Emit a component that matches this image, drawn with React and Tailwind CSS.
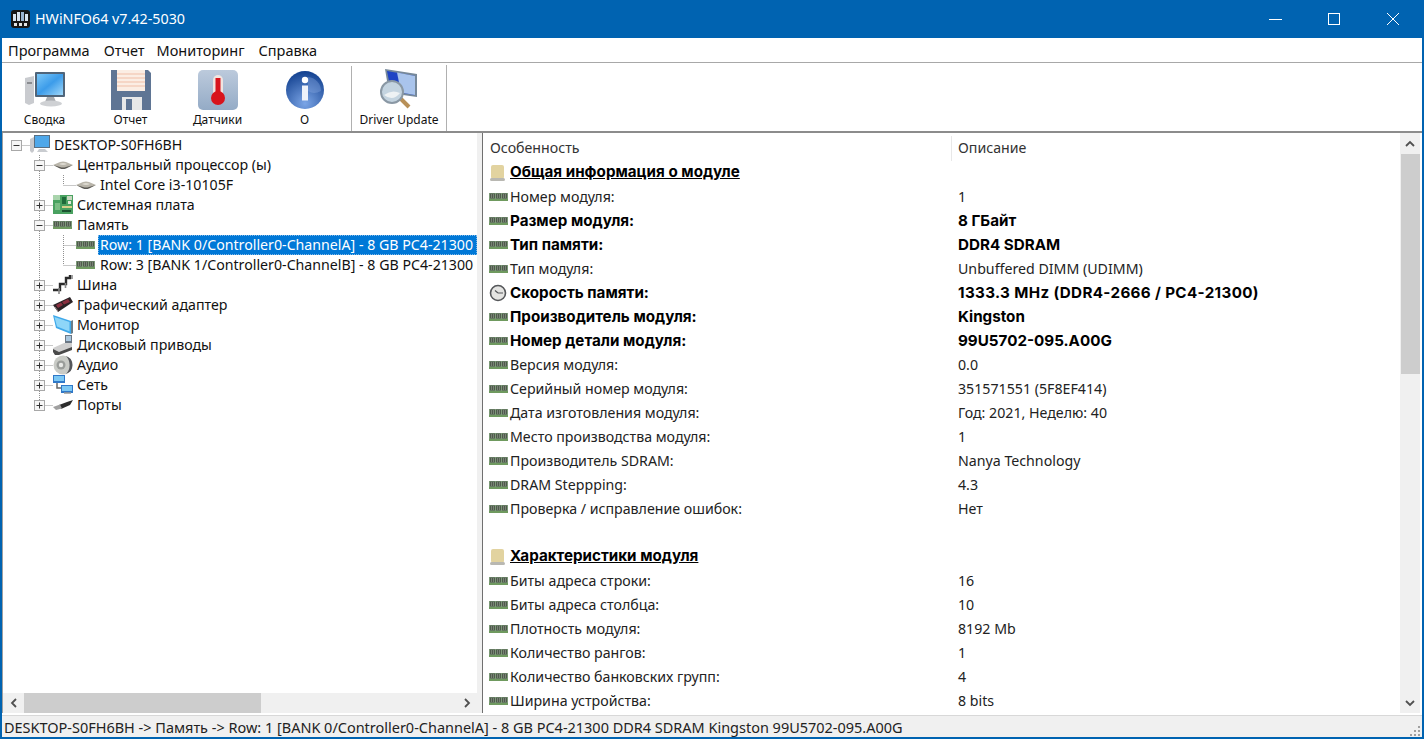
import { useId } from "react";

// small 16-20px tree / list icons
const RamIcon = () => (
  <svg width="20" height="10" viewBox="0 0 20 10" className="shrink-0">
    <rect x="0" y="1" width="19" height="8" fill="#7d9a78" />
    <rect x="1" y="1.5" width="5" height="5" fill="#4f5a4c" />
    <rect x="7" y="1.5" width="5" height="5" fill="#4f5a4c" />
    <rect x="13" y="1.5" width="5" height="5" fill="#4f5a4c" />
    <path d="M2.5 2V6 M4.5 2V6 M8.5 2V6 M10.5 2V6 M14.5 2V6 M16.5 2V6" stroke="#8a9486" strokeWidth="0.7" />
    <rect x="0" y="7" width="19" height="2" fill="#6f9a5f" />
  </svg>
);

const CpuIcon = () => (
  <svg width="20" height="10" viewBox="0 0 20 10" className="shrink-0">
    <path d="M0 5 L7 2 Q10 1 13 2 L20 5 L13 8 Q10 9 7 8 Z" fill="#b9b5aa" />
    <path d="M0 5 L7 7 Q10 8 13 7 L20 5 L13 8.5 Q10 9.5 7 8.5 Z" fill="#5a5853" />
    <path d="M6 4 Q10 2 14 4 Q10 6 6 4 Z" fill="#dedbd2" />
  </svg>
);

const BoardIcon = () => (
  <svg width="20" height="20" viewBox="0 0 20 20" className="shrink-0">
    <rect x="0" y="0" width="20" height="19" fill="#49a160" />
    <rect x="0" y="0" width="7" height="5" fill="#a9d4ac" />
    <rect x="9" y="2" width="4" height="7" fill="#1f6a3a" />
    <rect x="14" y="1" width="5" height="4" fill="#c9d8c0" />
    <rect x="2" y="8" width="5" height="7" fill="#7bbd84" />
    <rect x="9" y="11" width="10" height="2" fill="#d6d08a" />
    <rect x="9" y="15" width="9" height="2" fill="#1b5430" />
    <rect x="15" y="6" width="3" height="3" fill="#e2e6d8" />
  </svg>
);

const BusIcon = () => (
  <svg width="20" height="20" viewBox="0 0 20 20" className="shrink-0">
    <path d="M0 15 H7 V9 H13 V3 H17 V0" fill="none" stroke="#2b2b2b" strokeWidth="2.4" />
    <path d="M6 19 V13 M12.5 13 V8 M19 0 V4" stroke="#8a8a8a" strokeWidth="1.6" />
  </svg>
);

const GpuIcon = () => (
  <svg width="20" height="16" viewBox="0 0 20 16" className="shrink-0">
    <path d="M0 8 L17 0 L20 5 L5 15 Z" fill="#2a2326" />
    <path d="M3 8 L8 5.5 L10 8 L5 11 Z M9 5 L15 2 L17 5 L11 7.5 Z" fill="#8a3040" />
    <path d="M2 10 L5 14" stroke="#9a8080" strokeWidth="1" />
  </svg>
);

const MonitorIcon = () => (
  <svg width="20" height="20" viewBox="0 0 20 20" className="shrink-0">
    <path d="M0 0 L18 6 V19 L3 13 Z" fill="#3ea8ea" />
    <path d="M1.5 2 L16.5 7 V16.5 L4 11.5 Z" fill="#8ed6f8" />
    <path d="M18 6 L20 5 V18 L18 19 Z" fill="#6b7d88" />
  </svg>
);

const DiskIcon = () => (
  <svg width="20" height="20" viewBox="0 0 20 20" className="shrink-0">
    <rect x="12" y="0" width="7" height="9" fill="#6b7784" />
    <rect x="13" y="1" width="5" height="5" fill="#a9c6de" />
    <path d="M0 13 L11 8 H19 V13 L6 18 H2 Z" fill="#cfcfcf" />
    <path d="M0 14 L6 17 L19 12 V15 L6 20 H2 L0 17 Z" fill="#4a4a4a" />
  </svg>
);

const AudioIcon = () => (
  <svg width="20" height="20" viewBox="0 0 20 20" className="shrink-0">
    <circle cx="10" cy="10" r="9.5" fill="#c9cbc6" />
    <path d="M13 1 A9.5 9.5 0 0 1 13 19 A13 13 0 0 0 13 1" fill="#55575b" />
    <circle cx="8" cy="10" r="4.5" fill="#9a9d9a" />
    <circle cx="8" cy="10" r="2.2" fill="#e8e9e6" />
  </svg>
);

const NetworkIcon = () => (
  <svg width="20" height="20" viewBox="0 0 20 20" className="shrink-0">
    <path d="M0 0 H12 V8 H0 Z" fill="#2f78c8" />
    <rect x="1" y="1" width="10" height="5" fill="#7cc8f4" />
    <path d="M8 10 H20 V18 H8 Z" fill="#2f78c8" />
    <rect x="9" y="11" width="10" height="5" fill="#7cc8f4" />
    <path d="M4 8 V13 H8" fill="none" stroke="#666" strokeWidth="1.5" />
    <path d="M11 18 H18" stroke="#999" strokeWidth="1.5" />
  </svg>
);

const PortIcon = () => (
  <svg width="20" height="12" viewBox="0 0 20 12" className="shrink-0">
    <path d="M6 6 L14 3 L20 1 L17 6 L8 10 Z" fill="#2c2c2c" />
    <path d="M0 8 L7 5.5 L9 9.5 L3 11 Z" fill="#a0a0a0" />
  </svg>
);

const ClockIcon = () => (
  <svg width="18" height="18" viewBox="0 0 18 18" className="shrink-0">
    <circle cx="9" cy="9" r="7.5" fill="#e4e4e2" stroke="#55575a" strokeWidth="1.6" />
    <path d="M9 9 H14 M9 9 L6 6.5" stroke="#55575a" strokeWidth="1.2" />
  </svg>
);

const SectionIcon = () => (
  <svg width="18" height="18" viewBox="0 0 18 18" className="shrink-0">
    <rect x="2" y="1" width="13" height="14" rx="2" fill="#e2d3a0" />
    <rect x="1" y="14" width="15" height="3" rx="1.5" fill="#b9b8b2" />
  </svg>
);

const PcIcon = () => (
  <svg width="20" height="20" viewBox="0 0 20 20" className="shrink-0">
    <path d="M0 4 L4 2 V16 L2 18 L0 16 Z" fill="#c6c8cc" />
    <rect x="4" y="0" width="16" height="13" fill="#5a6f82" />
    <rect x="5" y="1" width="14" height="11" fill="#4fa8ea" />
    <path d="M9 14 H15 L18 17 H7 Z" fill="#c9ccd0" />
  </svg>
);

// dotted guide lines and the +/- box to the left of a tree row
const Guide = ({ level, box, last }) => {
  const w = [27, 50, 73][level];
  return (
    <svg width={w} height="20" className="shrink-0">
      {level === 0 && (
        <g>
          <path d="M13.5 10.5 H27" stroke="#909090" strokeDasharray="1 1" />
        </g>
      )}
      {level === 1 && (
        <g>
          <path d={last ? "M36.5 0 V10" : "M36.5 0 V20"} stroke="#909090" strokeDasharray="1 1" />
          <path d="M36.5 10.5 H50" stroke="#909090" strokeDasharray="1 1" />
        </g>
      )}
      {level === 2 && (
        <g>
          <path d="M36.5 0 V20" stroke="#909090" strokeDasharray="1 1" />
          <path d={last ? "M60.5 0 V10" : "M60.5 0 V20"} stroke="#909090" strokeDasharray="1 1" />
          <path d="M60.5 10.5 H73" stroke="#909090" strokeDasharray="1 1" />
        </g>
      )}
      {box && (
        <g>
          <rect x={level === 0 ? 8.5 : 31.5} y="5.5" width="10" height="10" fill="#f6f6f6" stroke="#a8a8a8" />
          <path d={level === 0 ? "M10.5 10.5 H16.5" : "M33.5 10.5 H39.5"} stroke="#333" />
          {box === "+" && <path d="M36.5 7.5 V13.5" stroke="#333" />}
        </g>
      )}
    </svg>
  );
};

const TreeRow = ({ level, box, last, icon, selected, children }) => (
  <div className="flex h-5 items-center whitespace-nowrap">
    <Guide level={level} box={box} last={last} />
    <span className="flex w-[22px] shrink-0 items-center">{icon}</span>
    <span className={selected ? "flex h-5 flex-1 items-center border border-dotted border-[#7fb8e8] bg-[#0078d7] pb-px pl-px text-white" : "pl-0.5"}>
      {children}
    </span>
  </div>
);

const SummaryIcon = () => {
  const id = useId();
  return (
    <svg width="42" height="36" viewBox="0 0 42 36">
      <defs>
        <linearGradient id={id} x1="0" y1="0" x2="1" y2="1">
          <stop offset="0" stopColor="#7cc8f8" />
          <stop offset="0.5" stopColor="#3c9cea" />
          <stop offset="1" stopColor="#a0d8fa" />
        </linearGradient>
      </defs>
      <path d="M1 6 L10 4 V31 L5 33 L1 31 Z" fill="#c9cbcf" />
      <path d="M3 10 H8 V12 H3 Z" fill="#8a8c90" />
      <rect x="11" y="0" width="30" height="25" rx="1" fill="#50657a" />
      <rect x="13" y="2" width="26" height="21" fill={`url(#${id})`} />
      <path d="M23 25 H30 L32 30 H21 Z" fill="#a9acb0" />
      <ellipse cx="27" cy="31.5" rx="11" ry="3" fill="#cfd1d4" />
    </svg>
  );
};

const SaveIcon = () => (
  <svg width="40" height="40" viewBox="0 0 40 40">
    <path d="M0 0 H37 L40 3 V40 H0 Z" fill="#5f7594" />
    <rect x="6" y="0" width="28" height="21" fill="#fbeee4" />
    <path d="M6 4 H34 M6 8 H34 M6 12 H34 M6 16 H34" stroke="#f0bfa8" />
    <rect x="11" y="27" width="20" height="13" fill="#e8e8e8" />
    <rect x="15" y="29" width="6" height="11" fill="#5f7594" />
  </svg>
);

const ThermoIcon = () => {
  const id = useId();
  return (
    <svg width="40" height="40" viewBox="0 0 40 40">
      <defs>
        <linearGradient id={id} x1="0" y1="0" x2="0" y2="1">
          <stop offset="0" stopColor="#bccadc" />
          <stop offset="1" stopColor="#94abc6" />
        </linearGradient>
      </defs>
      <rect x="0" y="0" width="40" height="40" rx="5" fill={`url(#${id})`} />
      <rect x="15" y="5" width="10" height="24" rx="5" fill="#f0e4e0" />
      <rect x="17.5" y="8" width="5" height="22" fill="#d8141c" />
      <circle cx="20" cy="28" r="7" fill="#d8141c" />
    </svg>
  );
};

const InfoIcon = () => {
  const id = useId();
  return (
    <svg width="38" height="38" viewBox="0 0 38 38">
      <defs>
        <radialGradient id={id} cx="0.5" cy="0.85" r="0.85">
          <stop offset="0" stopColor="#7ba5e6" />
          <stop offset="1" stopColor="#12408f" />
        </radialGradient>
      </defs>
      <circle cx="19" cy="19" r="19" fill={`url(#${id})`} />
      <path d="M22 6 A14 14 0 0 1 35 20 Q28 24 22 20 Z" fill="#8fb0e4" opacity="0.35" />
      <circle cx="19" cy="9" r="3.2" fill="#fff" />
      <rect x="16" y="14.5" width="6" height="15" fill="#eef2fa" />
    </svg>
  );
};

const DriverIcon = () => (
  <svg width="40" height="42" viewBox="0 0 40 42">
    <path d="M6 0 L38 5 V28 L10 24 Z" fill="#76889a" />
    <path d="M8 2 L36 7 V26 L12 22 Z" fill="#1f44c4" />
    <path d="M18 3.5 L36 7 V26 L22 23.5 Z" fill="#a9c4ec" />
    <path d="M20 28 L30 38" stroke="#b89058" strokeWidth="4" />
    <circle cx="13" cy="23" r="11" fill="#c4d4e0" stroke="#8a98a4" strokeWidth="2" />
    <path d="M5 26 Q13 20 21 24 Q14 33 5 26" fill="#eef2f4" />
  </svg>
);

const ToolButton = ({ label, icon, className }) => (
  <div className={`flex flex-col items-center ${className}`}>
    <div className="flex h-[40px] items-center">{icon}</div>
    <span className="mt-[2px] text-[12px] leading-4">{label}</span>
  </div>
);

const rows = [
  { section: "Общая информация о модуле" },
  { name: "Номер модуля:", value: "1" },
  { name: "Размер модуля:", value: "8 ГБайт", bold: true },
  { name: "Тип памяти:", value: "DDR4 SDRAM", bold: true },
  { name: "Тип модуля:", value: "Unbuffered DIMM (UDIMM)" },
  { name: "Скорость памяти:", value: "1333.3 MHz (DDR4-2666 / PC4-21300)", bold: true, clock: true, wide: true },
  { name: "Производитель модуля:", value: "Kingston", bold: true },
  { name: "Номер детали модуля:", value: "99U5702-095.A00G", bold: true },
  { name: "Версия модуля:", value: "0.0" },
  { name: "Серийный номер модуля:", value: "351571551 (5F8EF414)" },
  { name: "Дата изготовления модуля:", value: "Год: 2021, Неделю: 40" },
  { name: "Место производства модуля:", value: "1" },
  { name: "Производитель SDRAM:", value: "Nanya Technology" },
  { name: "DRAM Steppping:", value: "4.3" },
  { name: "Проверка / исправление ошибок:", value: "Нет" },
  { blank: true },
  { section: "Характеристики модуля" },
  { name: "Биты адреса строки:", value: "16" },
  { name: "Биты адреса столбца:", value: "10" },
  { name: "Плотность модуля:", value: "8192 Mb" },
  { name: "Количество рангов:", value: "1" },
  { name: "Количество банковских групп:", value: "4" },
  { name: "Ширина устройства:", value: "8 bits" },
];

const Row = ({ row }) => {
  if (row.blank) return <div className="h-6" />;
  if (row.section) {
    return (
      <div className="flex h-6 items-center pb-px">
        <span className="flex w-[21px] shrink-0"><SectionIcon /></span>
        <span className="[font-family:Inter,sans-serif] text-[15.2px] font-bold text-black underline">{row.section}</span>
      </div>
    );
  }
  const weight = row.bold ? "[font-family:Inter,sans-serif] text-[15.2px] font-bold text-black" : "";
  return (
    <div className="flex h-6 items-center whitespace-nowrap">
      <span className="flex w-[21px] shrink-0 items-center">{row.clock ? <ClockIcon /> : <RamIcon />}</span>
      <span className={`w-[448px] shrink-0 ${weight}`}>{row.name}</span>
      <span className={`${weight} ${row.wide ? "tracking-[0.35px]" : ""}`}>{row.value}</span>
    </div>
  );
};

const Chevron = ({ d }) => (
  <svg width="12" height="12" viewBox="0 0 12 12">
    <path d={d} fill="none" stroke="#505050" strokeWidth="1.8" />
  </svg>
);

export default function App() {
  return (
    <div className="flex h-screen w-screen flex-col overflow-hidden bg-white [font-family:'Noto_Sans',sans-serif] text-[14.2px] text-[#111]">
      {/* title bar */}
      <div className="flex h-[38px] shrink-0 items-center bg-[#0063b1] text-white">
        <svg width="20" height="20" viewBox="0 0 20 20" className="ml-[11px]">
          <rect x="0" y="1" width="19" height="18" rx="3" fill="#161616" />
          <rect x="2" y="5" width="3" height="7" fill="#d8e4f0" />
          <rect x="6" y="3" width="3" height="9" fill="#d8e4f0" />
          <rect x="10" y="3" width="3" height="9" fill="#9ab4d0" />
          <rect x="14" y="5" width="3" height="7" fill="#d8e4f0" />
          <rect x="3" y="14" width="3" height="3" fill="#e4e4e4" />
          <rect x="8" y="14" width="3" height="3" fill="#e4e4e4" />
          <rect x="13" y="14" width="3" height="3" fill="#e4e4e4" />
        </svg>
        <span className="ml-1 text-[14.3px]">HWiNFO64 v7.42-5030</span>
        <div className="ml-auto flex">
          <div className="flex h-[38px] w-[46px] items-center justify-center">
            <svg width="14" height="14" viewBox="0 0 14 14"><path d="M0 7.5 H13" stroke="#fff" /></svg>
          </div>
          <div className="ml-[12px] flex h-[38px] w-[46px] items-center justify-center">
            <svg width="14" height="14" viewBox="0 0 14 14"><rect x="1.5" y="1.5" width="11" height="11" fill="none" stroke="#fff" /></svg>
          </div>
          <div className="ml-[13px] mr-[8px] flex h-[38px] w-[46px] items-center justify-center">
            <svg width="14" height="14" viewBox="0 0 14 14"><path d="M1 1 L13 13 M13 1 L1 13" stroke="#fff" /></svg>
          </div>
        </div>
      </div>

      <div className="flex min-h-0 flex-1 flex-col border-x-2 border-b-2 border-[#0063b1]">
        {/* menu */}
        <div className="flex h-[25px] shrink-0 items-center gap-[14px] border-b border-[#a8a8a8] pl-[6px] pt-[2px] text-[14.5px]">
          <span>Программа</span>
          <span>Отчет</span>
          <span className="-ml-[2px]">Мониторинг</span>
          <span>Справка</span>
        </div>

        {/* toolbar */}
        <div className="flex h-[70px] shrink-0 border-b-2 border-[#8c8c8c]">
          <ToolButton label="Сводка" icon={<SummaryIcon />} className="w-[85px] pt-[7px]" />
          <ToolButton label="Отчет" icon={<SaveIcon />} className="w-[87px] pt-[7px]" />
          <ToolButton label="Датчики" icon={<ThermoIcon />} className="w-[87px] pt-[7px]" />
          <ToolButton label="О" icon={<InfoIcon />} className="w-[87px] pt-[7px]" />
          <div className="ml-[3px] mt-[3px] w-px bg-[#b0b0b0]" />
          <ToolButton label="Driver Update" icon={<DriverIcon />} className="w-[94px] pt-[7px]" />
          <div className="mt-[2px] w-px bg-[#b0b0b0]" />
        </div>

        {/* panels */}
        <div className="flex min-h-0 flex-1 pb-[2px]">
          {/* tree */}
          <div className="flex w-[475px] shrink-0 flex-col border-l border-[#a0a0a0]">
            <div className="min-h-0 flex-1 overflow-hidden pt-[2px]">
              <TreeRow level={0} box="-" icon={<PcIcon />}>DESKTOP-S0FH6BH</TreeRow>
              <TreeRow level={1} box="-" icon={<CpuIcon />}>Центральный процессор (ы)</TreeRow>
              <TreeRow level={2} last icon={<CpuIcon />}>Intel Core i3-10105F</TreeRow>
              <TreeRow level={1} box="+" icon={<BoardIcon />}>Системная плата</TreeRow>
              <TreeRow level={1} box="-" icon={<RamIcon />}>Память</TreeRow>
              <TreeRow level={2} icon={<RamIcon />} selected>Row: 1 [BANK 0/Controller0-ChannelA] - 8 GB PC4-21300</TreeRow>
              <TreeRow level={2} last icon={<RamIcon />}>Row: 3 [BANK 1/Controller0-ChannelB] - 8 GB PC4-21300</TreeRow>
              <TreeRow level={1} box="+" icon={<BusIcon />}>Шина</TreeRow>
              <TreeRow level={1} box="+" icon={<GpuIcon />}>Графический адаптер</TreeRow>
              <TreeRow level={1} box="+" icon={<MonitorIcon />}>Монитор</TreeRow>
              <TreeRow level={1} box="+" icon={<DiskIcon />}>Дисковый приводы</TreeRow>
              <TreeRow level={1} box="+" icon={<AudioIcon />}>Аудио</TreeRow>
              <TreeRow level={1} box="+" icon={<NetworkIcon />}>Сеть</TreeRow>
              <TreeRow level={1} box="+" last icon={<PortIcon />}>Порты</TreeRow>
            </div>
            <div className="flex h-5 shrink-0 items-center bg-[#f0f0f0]">
              <div className="flex w-[21px] shrink-0 justify-center"><Chevron d="M8 2 L4 6 L8 10" /></div>
              <div className="h-5 w-[237px] bg-[#cdcdcd]" />
              <div className="ml-auto flex w-[21px] justify-center"><Chevron d="M4 2 L8 6 L4 10" /></div>
            </div>
          </div>

          {/* splitter */}
          <div className="w-[6px] shrink-0 border-r border-[#707070] bg-[#f0f0f0]" />

          {/* details */}
          <div className="flex min-w-0 flex-1 pr-[2px]">
            <div className="min-w-0 flex-1 overflow-hidden">
              <div className="flex h-[28px] items-center pl-[7px] pt-[2px] text-[#333]">
                <span className="w-[461px] shrink-0">Особенность</span>
                <span className="h-[25px] w-px shrink-0 bg-[#e8e8e8]" />
                <span className="pl-[6px]">Описание</span>
              </div>
              <div className="pl-[6px] text-[#222]">
                {rows.map((row, i) => (
                  <Row key={i} row={row} />
                ))}
              </div>
            </div>
            <div className="flex w-[20px] shrink-0 flex-col items-center bg-[#f0f0f0]">
              <div className="flex h-[21px] items-center"><Chevron d="M2 8 L6 4 L10 8" /></div>
              <div className="h-[220px] w-[19px] bg-[#cdcdcd]" />
              <div className="mt-auto flex h-[20px] items-center"><Chevron d="M2 4 L6 8 L10 4" /></div>
            </div>
          </div>
        </div>

        {/* status bar */}
        <div className="flex h-[22px] shrink-0 items-center border-t border-[#d8d8d8] bg-[#f0f0f0] pl-[2px] pt-[2px] text-[14.48px] text-[#222]">
          <span>DESKTOP-S0FH6BH -&gt; Память -&gt; Row: 1 [BANK 0/Controller0-ChannelA] - 8 GB PC4-21300 DDR4 SDRAM Kingston 99U5702-095.A00G</span>
          <svg width="12" height="12" viewBox="0 0 12 12" className="ml-auto mr-px self-end">
            <path d="M9 1h2v2H9z M5 5h2v2H5z M9 5h2v2H9z M1 9h2v2H1z M5 9h2v2H5z M9 9h2v2H9z" fill="#a0a0a0" />
          </svg>
        </div>
      </div>
    </div>
  );
}
